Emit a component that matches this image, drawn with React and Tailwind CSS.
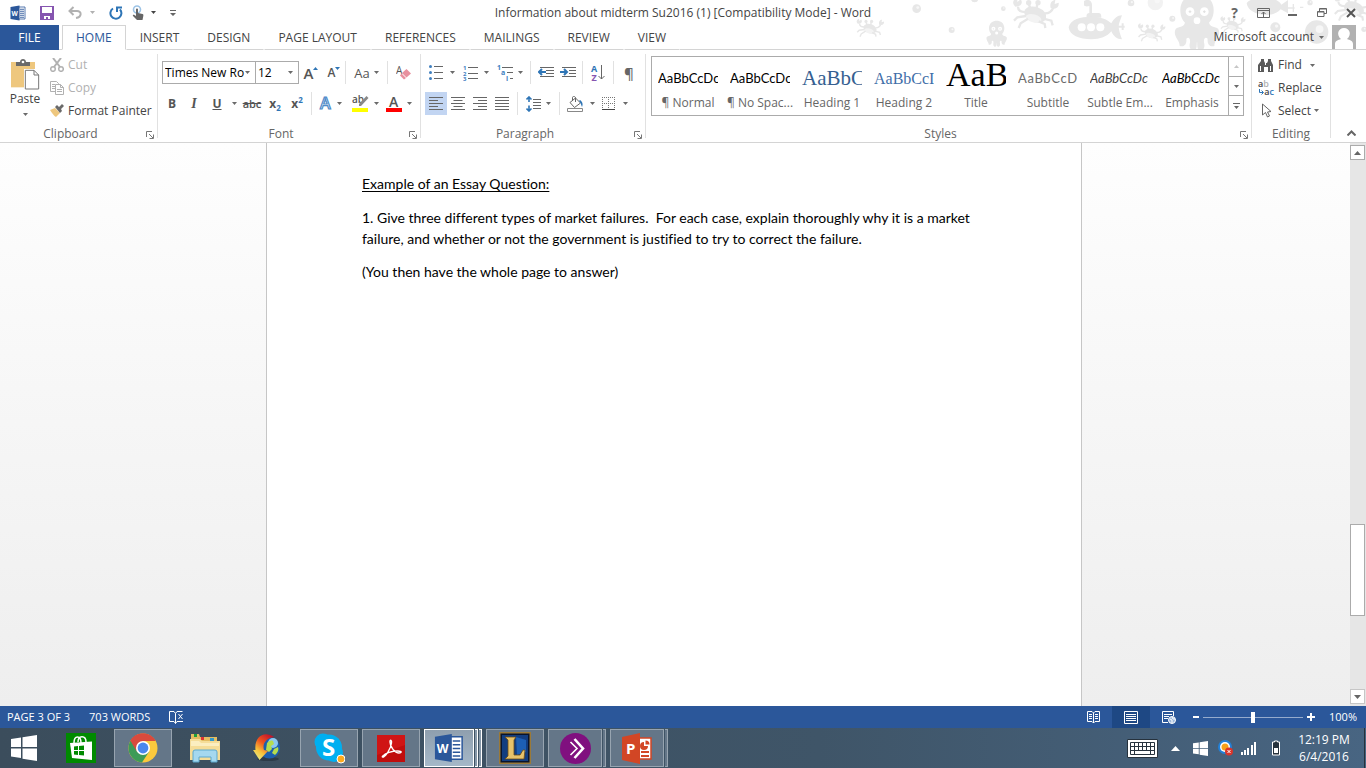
import React, { useState } from 'react';
import clsx from 'clsx';

const tabs = ['HOME', 'INSERT', 'DESIGN', 'PAGE LAYOUT', 'REFERENCES', 'MAILINGS', 'REVIEW', 'VIEW'];

const styleItems = [
  { name: '¶ Normal', sample: 'AaBbCcDc', look: "font-['Lato'] text-[13px] text-black" },
  { name: '¶ No Spac...', sample: 'AaBbCcDc', look: "font-['Lato'] text-[13px] text-black" },
  { name: 'Heading 1', sample: 'AaBbC', look: "font-['Liberation_Serif'] text-[21px] text-[#365f91]" },
  { name: 'Heading 2', sample: 'AaBbCcI', look: "font-['Liberation_Serif'] text-[16px] text-[#3f6ea8]" },
  { name: 'Title', sample: 'AaB', look: "pb-[8px] font-['Liberation_Serif'] text-[34px] text-black" },
  { name: 'Subtitle', sample: 'AaBbCcD', look: "font-['Lato'] text-[13px] tracking-wider text-[#6a6a6a]" },
  { name: 'Subtle Em...', sample: 'AaBbCcDc', look: "font-['Lato'] text-[13px] italic text-[#404040]" },
  { name: 'Emphasis', sample: 'AaBbCcDc', look: "font-['Lato'] text-[13px] italic text-black" },
];

const Caret = ({ className = 'text-[#6a6a6a]' }) => (
  <svg width="5" height="3" viewBox="0 0 5 3" className={clsx('shrink-0', className)}>
    <path d="M0 0h5L2.5 3z" fill="currentColor" />
  </svg>
);

const Separator = () => <div className="h-full w-px shrink-0 bg-[#e1e1e1]" />;

const Tool = ({ label, className = 'w-[22px]', children }) => (
  <button type="button" aria-label={label} className={clsx('flex h-full shrink-0 items-center justify-center', className)}>
    {children}
  </button>
);

const Launcher = () => (
  <svg width="8" height="8" viewBox="0 0 8 8" fill="none" stroke="#777">
    <path d="M.5 6V.5H6M3 3l4 4M7.5 3.5v4h-4" />
  </svg>
);

const Group = ({ title, launcher, className, children }) => (
  <section className={clsx('flex h-[84px] flex-col border-r border-[#e1e1e1]', className)}>
    <div className="h-[72px] shrink-0">{children}</div>
    <div className={clsx('relative flex h-[16px] shrink-0 items-center justify-center text-[#666]', launcher && 'pr-[16px]')}>
      {title}
      {launcher && (
        <button type="button" aria-label={title + ' settings'} className="absolute right-[3px] top-[5px]">
          <Launcher />
        </button>
      )}
    </div>
  </section>
);

/* ---------- Title bar ---------- */

const WordIcon = ({ size }) => (
  <svg width={size} height={size} viewBox="0 0 32 32">
    <path d="M17 4h13v24H17z" fill="#fff" stroke="#2b579a" strokeWidth="1.6" />
    <path d="M20 8.500h8M20 12.500h8M20 16.500h8M20 20.500h8M20 24.500h8" stroke="#2b579a" strokeWidth="1.8" />
    <path d="M1 4l18-3v30L1 28z" fill="#2b579a" />
    <text x="3" y="21" fontFamily="Open Sans" fontWeight="700" fontSize="13" fill="#fff">W</text>
  </svg>
);

const Crab = ({ x, y, s = 1 }) => (
  <g transform={`translate(${x} ${y}) scale(${s})`} fill="none" stroke="#e7e7e7" strokeWidth="7">
    <ellipse cx="0" cy="0" rx="34" ry="23" fill="#e7e7e7" stroke="none" transform="rotate(20)" />
    <ellipse cx="-2" cy="12" rx="24" ry="12" fill="#f3f3f3" stroke="none" transform="rotate(15)" />
    <path d="M-28-8c-16 0-24-6-24-16M28-4c14 0 22-6 26-18M-28 4l-26 4-10 10M-22 12l-22 14-6 14M24 12l24 6 4 14M10 20l18 8 2 12M-14-18l-6-14M4-20l2-14" />
    <path d="M-60-24c-12-10-6-24 6-26l0 12 10-8c8 10 2 22-16 22zM46-20c-4-14 4-24 14-24l-2 12 12-4c2 14-8 22-24 16z" fill="#e7e7e7" stroke="none" />
    <circle cx="-20" cy="-36" r="8" fill="#e7e7e7" stroke="none" />
    <circle cx="8" cy="-36" r="8" fill="#e7e7e7" stroke="none" />
  </g>
);

const Octopus = ({ x, y, s = 1 }) => (
  <g transform={`translate(${x} ${y}) scale(${s})`}>
    <path d="M-50-32c0-64 100-64 100 0 0 18-6 30-14 38 4 18 26 8 30 24 4 20-14 28-14 46-14 4-22-6-20-22-8-8-14 2-10 16 2 14-6 20-14 20-10-4-6-20-8-28-2 8 2 24-8 28-8 0-16-6-14-20 4-14-2-24-10-16 2 16-6 26-20 22 0-18-18-26-14-46 4-16 26-6 30-24-8-8-14-20-14-38z" fill="#e7e7e7" />
    <circle cx="-21" cy="-27" r="13" fill="#fff" />
    <circle cx="22" cy="-27" r="13" fill="#fff" />
    <circle cx="0" cy="0" r="10" fill="#fff" />
    <path d="M-25-27h8M-21-31v8M18-27h8M22-31v8" stroke="#e0e0e0" strokeWidth="3" />
  </g>
);

const Bubble = ({ x, y, r, light }) => (
  <g>
    <circle cx={x} cy={y} r={r} fill={light ? '#f2f2f2' : '#e7e7e7'} />
    <circle cx={x + r / 4} cy={y - r / 4} r={r / 3} fill="#f7f7f7" />
  </g>
);

const Seascape = () => (
  <svg className="pointer-events-none absolute right-0 top-0" width="516" height="49" viewBox="0 0 1548 147" aria-hidden="true">
    <Bubble x={200} y={26} r={13} />
    <Bubble x={305} y={90} r={9} />
    <Bubble x={374} y={-4} r={11} />
    <Bubble x={460} y={26} r={7} />
    <Bubble x={843} y={9} r={10} />
    <Bubble x={916} y={8} r={23} light />
    <Bubble x={967} y={56} r={9} />
    <Bubble x={1276} y={82} r={15} />
    <Bubble x={1400} y={96} r={35} />
    <Bubble x={1380} y={8} r={8} />
    <Bubble x={1542} y={88} r={8} />
    <Crab x={60} y={86} s={0.6} />
    <Crab x={556} y={44} />
    <Crab x={904} y={100} s={0.6} />
    <Crab x={1148} y={76} s={0.55} />
    <Crab x={1512} y={26} s={0.9} />
    <Octopus x={440} y={99} s={0.46} />
    <Octopus x={1041} y={62} />
    <g fill="#e7e7e7">
      <path d="M702 3c14-8 24 0 24 12v24h18c8 0 10 4 10 14h-44c-2-10 2-14 8-14V18c-6 2-14 2-16-2z" />
      <path d="M656 82c4-24 36-32 68-32 30 0 50 10 60 20 8-14 18-24 32-24-6 16-10 26-10 34s4 22 10 38c-16 0-26-10-32-24-12 16-34 24-60 24-36 0-66-12-68-36z" />
      <path d="M800 80h24M818 70v20" stroke="#e7e7e7" strokeWidth="6" />
      <path d="M1190 10c8-20 90-26 104 4l20-14v40l-22-12c-24 30-98 18-102-18z" />
      <path d="M1300 24h34M1330 12v24M1350 22h10" stroke="#e7e7e7" strokeWidth="4" />
    </g>
    <g fill="#fff">
      <circle cx="695" cy="82" r="12" />
      <circle cx="723" cy="82" r="12" />
      <circle cx="751" cy="82" r="12" />
    </g>
  </svg>
);

const TitleBar = () => (
  <div className="relative grid h-[25px] grid-cols-[1fr_auto_1fr] items-center">
    <div className="flex items-center pl-[10px]">
      <WordIcon size={16} />
      <Tool label="Save" className="ml-[11px] w-[20px]">
        <svg width="14" height="14" viewBox="0 0 14 14">
          <path d="M0 0h14v14H0z" fill="#8655b0" />
          <path d="M2 1h10v6H2zM4 10h6v3H8v-2H6v2H4z" fill="#fff" />
        </svg>
      </Tool>
      <Tool label="Undo" className="ml-[9px] w-[18px]">
        <svg width="14" height="13" viewBox="0 0 14 13" fill="none" stroke="#b1b1b1" strokeWidth="2">
          <path d="M5.500 1L1.500 5l4 4M2 5h7c5 0 5 6-1 7" />
        </svg>
      </Tool>
      <Tool label="Undo history" className="w-[16px]"><Caret className="text-[#b1b1b1]" /></Tool>
      <Tool label="Redo" className="ml-[6px] w-[20px]">
        <svg width="14" height="14" viewBox="0 0 14 14" fill="none" stroke="#2e75b6" strokeWidth="2">
          <path d="M4 2.500A5.500 5.500 0 1 0 11 3.500M8 6V1.500h5" />
        </svg>
      </Tool>
      <Tool label="Touch mode" className="ml-[3px] w-[18px]">
        <svg width="13" height="16" viewBox="0 0 13 16">
          <circle cx="5" cy="4.500" r="3.500" fill="none" stroke="#9cc3e6" strokeWidth="1.600" />
          <path d="M4 4.500c0-1.500 2-1.500 2 0V8l4.500 1c1 .3 1 1 .8 2L10.500 15H5L1 11c-.6-1 .6-1.600 1.400-1L4 11z" fill="#666" />
        </svg>
      </Tool>
      <Tool label="Touch options" className="w-[12px]"><Caret className="text-[#444]" /></Tool>
      <Tool label="Customize toolbar" className="ml-[7px] w-[14px]">
        <svg width="6" height="6" viewBox="0 0 6 6" fill="#666"><path d="M0 0h6v1H0zM0 3h6L3 6z" /></svg>
      </Tool>
    </div>
    <h1 className="text-[#444]">Information about midterm Su2016 (1) [Compatibility Mode] - Word</h1>
    <div className="flex items-center justify-end pr-px text-[#666]">
      <Tool label="Help" className="w-[29px]"><span className="text-[14px] font-bold">?</span></Tool>
      <Tool label="Ribbon display options" className="w-[29px]">
        <svg width="13" height="10" viewBox="0 0 13 10" fill="none" stroke="#666"><path d="M.5.500h12v9H.500zM.500 2.500h12M6.500 9V4M4.500 6l2-2 2 2" /></svg>
      </Tool>
      <Tool label="Minimize" className="w-[29px]">
        <svg width="9" height="10" viewBox="0 0 9 10"><path d="M0 6h9v2H0z" fill="#666" /></svg>
      </Tool>
      <Tool label="Restore" className="w-[30px]">
        <svg width="10" height="10" viewBox="0 0 10 10" fill="none" stroke="#666"><path d="M2.500 3V.500h7v5H7M.500 3.500H7v5H.500zM.500 4H7M2.500 1h7" /></svg>
      </Tool>
      <Tool label="Close" className="w-[28px]">
        <svg width="10" height="10" viewBox="0 0 10 10" stroke="#555" strokeWidth="2"><path d="M1 1l8 8M9 1L1 9" /></svg>
      </Tool>
    </div>
  </div>
);

const TabStrip = ({ active, onSelect }) => (
  <nav className="relative flex h-[25px] text-[#444]">
    <button type="button" className="w-[59px] bg-[#2b579a] text-white">FILE</button>
    <div className="w-[3px] border-b border-[#d4d4d4]" />
    {tabs.map((tab) => (
      <button
        key={tab}
        type="button"
        onClick={() => onSelect(tab)}
        className={clsx(
          'border px-[13px]',
          tab === active
            ? 'border-[#d4d4d4] border-b-white bg-white text-[#2b579a]'
            : 'border-transparent border-b-[#d4d4d4]'
        )}
      >
        {tab}
      </button>
    ))}
    <div className="flex flex-1 items-center justify-end gap-[8px] border-b border-[#d4d4d4] pr-[10px]">
      <button type="button" className="flex items-center gap-[5px]">
        Microsoft account <Caret />
      </button>
      <svg width="24" height="24" viewBox="0 0 24 24">
        <path d="M0 0h24v24H0z" fill="#b1b1b1" />
        <path d="M3 24v-5c0-3 3-4 6-5-5-4-3-11 3-11s8 7 3 11c3 1 6 2 6 5v5z" fill="#fff" />
      </svg>
    </div>
  </nav>
);

/* ---------- Ribbon groups ---------- */

const ClipboardGroup = () => (
  <Group title="Clipboard" launcher className="w-[158px]">
    <div className="flex">
      <button type="button" className="flex w-[50px] flex-col items-center pt-[4px] text-[#444]">
        <svg width="30" height="32" viewBox="36 171 90 96">
          <path d="M39 183h72v76H39z" fill="#eec77e" />
          <path d="M54 183h12c0-12 18-12 18 0h12v12H54z" fill="#6a6a6a" />
          <circle cx="75" cy="183" r="4" fill="#fff" />
          <path d="M78 204h45v63H78z" fill="#fff" />
          <path d="M82 208h26l14 14v42H82zM108 208v14h14" fill="#fff" stroke="#777" strokeWidth="3" />
        </svg>
        <span className="h-[18px] leading-[18px]">Paste</span>
        <span className="flex h-[12px] items-center"><Caret /></span>
      </button>
      <div className="flex flex-col text-[#b1b1b1]">
        <button type="button" className="flex h-[22px] items-center gap-[4px]">
          <svg width="14" height="14" viewBox="0 0 14 14" fill="none" stroke="currentColor" strokeWidth="1.500">
            <circle cx="3" cy="11" r="2.300" /><circle cx="11" cy="11" r="2.300" />
            <path d="M4 9l7-9M10 9L3 0" strokeWidth="2" />
          </svg>
          Cut
        </button>
        <button type="button" className="flex h-[23px] items-center gap-[4px]">
          <svg width="14" height="14" viewBox="0 0 14 14" fill="#fff" stroke="currentColor">
            <path d="M.500.500h6l2 2v8h-8zM2 3.500h3M2 5.500h3M2 7.500h3" />
            <path d="M5.500 3.500h5l3 3v7h-8zM10.500 3.500v3h3M7 8.500h5M7 10.500h5" />
          </svg>
          Copy
        </button>
        <button type="button" className="flex h-[23px] items-center gap-[4px] text-[#444]">
          <svg width="14" height="13" viewBox="0 0 14 13">
            <path d="M0 6l5-2 5 5-4 4c-2-1-4-4-6-7z" fill="#eec77e" />
            <path d="M5 3l2-2 2 2 3-3 2 2-3 3 1 2-2 2z" fill="#6a6a6a" />
          </svg>
          Format Painter
        </button>
      </div>
    </div>
  </Group>
);

const FontGroup = () => (
  <Group title="Font" launcher className="w-[263px]">
    <div className="flex flex-col gap-[8px] pl-[4px] pt-[7px]">
      <div className="flex h-[23px]">
        <div className="flex w-[94px] items-center border border-[#ababab]">
          <input aria-label="Font" defaultValue="Times New Ro" className="w-[82px] pl-[2px] text-black outline-none" />
          <Caret />
        </div>
        <div className="-ml-px flex w-[44px] items-center border border-[#ababab]">
          <input aria-label="Font size" defaultValue="12" className="w-[32px] pl-[2px] text-black outline-none" />
          <Caret />
        </div>
        <Tool label="Grow font" className="w-[24px] text-[#555]">
          <span className="text-[15px] font-semibold">A</span>
          <svg width="5" height="12" viewBox="0 0 5 12"><path d="M0 3h5L2.500 0z" fill="#2e75b6" /></svg>
        </Tool>
        <Tool label="Shrink font" className="w-[22px] text-[#555]">
          <span className="text-[12px] font-semibold">A</span>
          <svg width="5" height="12" viewBox="0 0 5 12"><path d="M0 0h5L2.500 3z" fill="#2e75b6" /></svg>
        </Tool>
        <Separator />
        <Tool label="Change case" className="w-[41px] gap-[4px] text-[#555]">
          <span className="text-[13px]">Aa</span><Caret />
        </Tool>
        <Separator />
        <Tool label="Clear formatting" className="w-[30px]">
          <svg width="15" height="15" viewBox="0 0 15 15">
            <text x="0" y="9" fontFamily="Open Sans" fontSize="10" fill="#555">A</text>
            <path d="M10.500 4L15 8.500l-4.500 4L6 8z" fill="#e8919f" />
            <path d="M5.500 8.500l4.500 4.500-2 1.500-4-4z" fill="#e8919f" />
          </svg>
        </Tool>
      </div>
      <div className="flex h-[23px] text-[#555]">
        <Tool label="Bold" className="w-[20px]"><b>B</b></Tool>
        <Tool label="Italic" className="w-[24px]"><i className="font-['Liberation_Serif'] text-[14px] font-bold">I</i></Tool>
        <Tool label="Underline"><b className="underline">U</b></Tool>
        <Tool label="Underline style" className="w-[12px]"><Caret /></Tool>
        <Tool label="Strikethrough" className="w-[24px]"><span className="text-[11px] font-semibold line-through">abc</span></Tool>
        <Tool label="Subscript"><b>x</b><b className="pt-[8px] text-[8px] text-[#2e75b6]">2</b></Tool>
        <Tool label="Superscript"><b>x</b><b className="pb-[8px] text-[8px] text-[#2e75b6]">2</b></Tool>
        <div className="w-[3px]" />
        <Separator />
        <Tool label="Text effects" className="w-[36px] gap-[4px]">
          <svg width="14" height="17" viewBox="0 0 14 17">
            <text x="1" y="14" fontFamily="Open Sans" fontSize="16" fontWeight="600" fill="#fff" stroke="#4f8bc9" strokeWidth="1.200">A</text>
          </svg>
          <Caret />
        </Tool>
        <Tool label="Highlight" className="w-[34px] gap-[5px]">
          <svg width="17" height="17" viewBox="0 0 17 17">
            <text x="0" y="8" fontFamily="Open Sans" fontSize="10" fontWeight="600" fill="#555">ab</text>
            <path d="M14.500 1l2 2L9 11H7V9z" fill="#888" />
            <path d="M0 13h16v4H0z" fill="#ff0" />
          </svg>
          <Caret />
        </Tool>
        <Tool label="Font color" className="w-[34px] gap-[5px]">
          <svg width="16" height="17" viewBox="0 0 16 17">
            <text x="3" y="12" fontFamily="Open Sans" fontSize="14" fontWeight="600" fill="#555">A</text>
            <path d="M0 13h16v4H0z" fill="#f00" />
          </svg>
          <Caret />
        </Tool>
      </div>
    </div>
  </Group>
);

const AlignIcon = ({ d }) => (
  <svg width="14" height="13" viewBox="0 0 14 13" stroke="#666"><path d={d} /></svg>
);

const ParagraphGroup = () => (
  <Group title="Paragraph" launcher className="w-[225px]">
    <div className="flex flex-col gap-[8px] pl-[4px] pt-[7px]">
      <div className="flex h-[23px]">
        <Tool label="Bullets" className="w-[34px] gap-[7px]">
          <svg width="14" height="15" viewBox="0 0 14 15" fill="#3f7fbf">
            <circle cx="1.500" cy="1.500" r="1.500" /><circle cx="1.500" cy="7.500" r="1.500" /><circle cx="1.500" cy="13.500" r="1.500" />
            <path d="M5 1.500h9M5 7.500h9M5 13.500h9" stroke="#666" />
          </svg>
          <Caret />
        </Tool>
        <Tool label="Numbering" className="w-[34px] gap-[6px]">
          <svg width="15" height="16" viewBox="0 0 15 16" fill="#3f7fbf" fontFamily="Open Sans" fontSize="6" fontWeight="700">
            <text x="0" y="5">1</text><text x="0" y="10.500">2</text><text x="0" y="16">3</text>
            <path d="M5 2.500h10M5 8.500h10M5 13.500h10" stroke="#666" />
          </svg>
          <Caret />
        </Tool>
        <Tool label="Multilevel list" className="w-[34px] gap-[4px]">
          <svg width="17" height="16" viewBox="0 0 17 16" fill="#3f7fbf" fontFamily="Open Sans" fontSize="7" fontWeight="700">
            <text x="0" y="5">1</text><text x="4" y="10">a</text><text x="9" y="16">i</text>
            <path d="M5 2.500h11M10 7.500h6M13 13.500h3" stroke="#666" />
          </svg>
          <Caret />
        </Tool>
        <div className="w-[3px]" />
        <Separator />
        <div className="w-[4px]" />
        <Tool label="Decrease indent">
          <svg width="16" height="11" viewBox="0 0 16 11" fill="none" stroke="#666">
            <path d="M2 .5h14M8 3.500h8M8 6.500h8M2 9.500h14" /><path d="M8 5H2M4 2L1 5l3 3" stroke="#2e75b6" strokeWidth="2" />
          </svg>
        </Tool>
        <Tool label="Increase indent">
          <svg width="16" height="11" viewBox="0 0 16 11" fill="none" stroke="#666">
            <path d="M2 .5h14M9 3.500h7M9 6.500h7M2 9.500h14" /><path d="M0 5h6M4 2l3 3-3 3" stroke="#2e75b6" strokeWidth="2" />
          </svg>
        </Tool>
        <div className="w-[3px]" />
        <Separator />
        <Tool label="Sort" className="w-[30px]">
          <span className="flex flex-col text-[9px] font-bold leading-[9px]">
            <span className="text-[#2e75b6]">A</span>
            <span className="text-[#8655b0]">Z</span>
          </span>
          <svg width="8" height="15" viewBox="0 0 8 15" fill="none" stroke="#666">
            <path d="M4.500 0v14M1.500 11l3 3 3-3" />
          </svg>
        </Tool>
        <Separator />
        <Tool label="Show marks" className="w-[30px]"><span className="text-[15px] font-semibold text-[#666]">¶</span></Tool>
      </div>
      <div className="flex h-[23px]">
        <Tool label="Align left" className="w-[22px] bg-[#c2d5f2]"><AlignIcon d="M0 .5h14M0 3.500h9M0 6.500h14M0 9.500h9M0 12.500h14" /></Tool>
        <Tool label="Center"><AlignIcon d="M0 .5h14M2.500 3.500h9M0 6.500h14M2.500 9.500h9M0 12.500h14" /></Tool>
        <Tool label="Align right"><AlignIcon d="M0 .5h14M5 3.500h9M0 6.500h14M5 9.500h9M0 12.500h14" /></Tool>
        <Tool label="Justify"><AlignIcon d="M0 .5h14M0 3.500h14M0 6.500h14M0 9.500h14M0 12.500h14" /></Tool>
        <div className="w-[4px]" />
        <Separator />
        <Tool label="Line spacing" className="w-[41px] gap-[5px]">
          <svg width="15" height="16" viewBox="0 0 15 16" fill="none" stroke="#666">
            <path d="M7 3.500h8M7 6.500h8M7 9.500h8M7 12.500h8" />
            <path d="M3 1v5M.500 3.500L3 1l2.500 2.500M3 9.500V15M.500 12.500L3 15l2.500-2.500" stroke="#2e75b6" strokeWidth="1.600" />
          </svg>
          <Caret />
        </Tool>
        <Separator />
        <div className="w-[4px]" />
        <Tool label="Shading" className="w-[34px] gap-[6px]">
          <svg width="17" height="16" viewBox="0 0 17 16" fill="none" stroke="#666">
            <path d="M3 6.500L8.500 2l5 5-6 4.500zM5.500 5V1.500C5.500 0 8.500 0 8.500 2v4" />
            <path d="M13 4c3 2 3 5 2 7-1-2-1-4-3-6z" fill="#2e75b6" stroke="none" />
            <path d="M.500 12.500h15v3H.500z" stroke="#888" />
          </svg>
          <Caret />
        </Tool>
        <Tool label="Borders" className="w-[34px] gap-[7px]">
          <svg width="14" height="14" viewBox="0 0 14 14" stroke="#777">
            <path d="M0 .5h13M0 6.500h13M.500 0v13M6.500 0v13M12.500 0v13" strokeDasharray="1 1" fill="none" />
            <path d="M0 12.500h13" stroke="#444" />
          </svg>
          <Caret />
        </Tool>
      </div>
    </div>
  </Group>
);

const StylesGroup = () => (
  <Group title="Styles" launcher className="min-w-0 flex-1">
    <div className="flex pl-[5px] pr-[7px] pt-[2px]">
      <div className="flex h-[60px] min-w-0 flex-1 border border-[#ababab]">
        <div className="flex flex-1 overflow-hidden">
          {styleItems.map((item) => (
            <button key={item.name} type="button" className="flex w-[72px] shrink-0 flex-col items-center pt-[7px] text-[#666]">
              <span className={clsx('flex h-[29px] w-[60px] items-center overflow-hidden whitespace-nowrap leading-none', item.look)}>
                {item.sample}
              </span>
              <span className="leading-[20px]">{item.name}</span>
            </button>
          ))}
        </div>
        <div className="flex w-[15px] flex-col divide-y divide-[#ababab] border-l border-[#ababab]">
          <button type="button" aria-label="Previous styles" className="flex flex-1 items-center justify-center">
            <Caret className="rotate-180 text-[#c6c6c6]" />
          </button>
          <button type="button" aria-label="Next styles" className="flex flex-1 items-center justify-center"><Caret /></button>
          <button type="button" aria-label="More styles" className="flex flex-1 items-center justify-center">
            <svg width="7" height="6" viewBox="0 0 7 6" fill="#666"><path d="M0 0h7v1H0zM1 3h5L3.500 6z" /></svg>
          </button>
        </div>
      </div>
    </div>
  </Group>
);

const EditingGroup = () => (
  <Group title="Editing" className="w-[79px]">
    <div className="flex flex-col pl-[6px] text-[#444]">
      <button type="button" className="flex h-[22px] items-center gap-[4px]">
        <svg width="16" height="13" viewBox="0 0 16 13" fill="#5a5a5a">
          <path d="M3 0h3v2l1 2h2l1-2V0h3v2l2 4v7h-5V8H6v5H0V6l3-4z" />
          <path d="M2.500 7v5M12.500 7v5M7.500 4v2" stroke="#fff" />
        </svg>
        Find
        <span className="pl-[4px]"><Caret /></span>
      </button>
      <button type="button" className="flex h-[23px] items-center gap-[4px]">
        <span className="flex h-[16px] w-[16px] flex-col text-[9px] font-semibold leading-[8px]">
          <span className="text-left">a<span className="text-[#b1b1b1]">b</span></span>
          <span className="flex items-center justify-end">
            <svg width="5" height="6" viewBox="0 0 5 6" fill="none" stroke="#2e75b6"><path d="M.500 0v3.500H4M2.500 1.500l2 2-2 2" /></svg>
            <span>a<span className="text-[#2e75b6]">c</span></span>
          </span>
        </span>
        Replace
      </button>
      <button type="button" className="flex h-[23px] items-center gap-[4px]">
        <svg width="16" height="15" viewBox="0 0 16 15" fill="#fff" stroke="#666">
          <path d="M4.500 1v11l3-2.500 2 4.500 2-1-2-4 3.500-.5z" />
        </svg>
        <span className="flex items-center gap-[3px]">Select <Caret /></span>
      </button>
    </div>
  </Group>
);

/* ---------- Document ---------- */

const ScrollBar = () => (
  <div className="flex w-[16px] flex-col bg-[#e6e6e6] pb-[2px] pr-px pt-[2px]">
    <button type="button" aria-label="Scroll up" className="flex h-[15px] items-center justify-center border border-[#ababab] bg-white">
      <svg width="7" height="4" viewBox="0 0 7 4"><path d="M0 4h7L3.500 0z" fill="#666" /></svg>
    </button>
    <div className="flex-[365]" />
    <div className="h-[92px] border border-[#ababab] bg-white" />
    <div className="flex-[73]" />
    <button type="button" aria-label="Scroll down" className="flex h-[15px] items-center justify-center border border-[#c6c6c6] bg-white">
      <svg width="7" height="4" viewBox="0 0 7 4"><path d="M0 0h7L3.500 4z" fill="#666" /></svg>
    </button>
  </div>
);

const Document = () => (
  <main className="flex flex-1 bg-linear-to-b from-[#fefefe] to-[#eeeeee]">
    <div className="flex flex-1 justify-center pr-[2px]">
      <article className="w-[816px] border-x border-[#c6c6c6] bg-white px-[95px] pt-[30px] font-['Lato',sans-serif] text-[14px] leading-[21px] text-black [font-variant-ligatures:none]">
        <p className="mb-[13px] underline underline-offset-2">Example of an Essay Question:</p>
        <p className="mb-[12px]">
          1. Give three different types of market failures.&nbsp; For each case, explain thoroughly why it is a market
          failure, and whether or not the government is justified to try to correct the failure.
        </p>
        <p>(You then have the whole page to answer)</p>
      </article>
    </div>
    <ScrollBar />
  </main>
);

/* ---------- Status bar ---------- */

const StatusBar = () => {
  const [zoom, setZoom] = useState(50);
  return (
    <footer className="flex h-[22px] items-center justify-between bg-[#2b579a] text-[11px] text-white">
      <div className="flex items-center gap-[19px] pl-[7px]">
        <span>PAGE 3 OF 3</span>
        <span>703 WORDS</span>
        <svg width="15" height="13" viewBox="0 0 15 13" fill="none" stroke="#fff">
          <path d="M6.500 2.500L5 .5H.500v10H5l1.500 2 1.500-2h6M6.500 2.500v10M6.500 2.500L8 .5h5.500M9.500 3l4 5M13.500 3l-4 5" />
        </svg>
      </div>
      <div className="flex h-full items-center">
        <Tool label="Read mode" className="w-[38px]">
          <svg width="13" height="13" viewBox="0 0 13 13" fill="none" stroke="#fff">
            <path d="M6.500 2v10L5 10.500H.500V.500H5L6.500 2 8 .5h4.500v10H8L6.500 12M2 3.500h3M2 5.500h3M2 7.500h3M8 3.500h3M8 5.500h3M8 7.500h3" />
          </svg>
        </Tool>
        <Tool label="Print layout" className="w-[38px] bg-[#1e4884]">
          <svg width="14" height="13" viewBox="0 0 14 13" fill="none" stroke="#fff"><path d="M.500.500h13v12H.500zM2 3.500h10M2 5.500h10M2 7.500h10M2 9.500h10" /></svg>
        </Tool>
        <Tool label="Web layout" className="w-[38px]">
          <svg width="14" height="13" viewBox="0 0 14 13" fill="none" stroke="#fff">
            <path d="M6 11.500H.500V.500h11V5M2 3.500h8M2 5.500h5M2 7.500h4" /><circle cx="10" cy="9" r="3.500" fill="#9db8dc" /><path d="M8 8l2 1v3M10 6l1 2 2 0" />
          </svg>
        </Tool>
        <button type="button" aria-label="Zoom out" className="ml-[5px] h-[2px] w-[6px] bg-white" />
        <input
          type="range"
          aria-label="Zoom"
          value={zoom}
          onChange={(e) => setZoom(e.target.value)}
          className="mx-[4px] h-[11px] w-[100px] appearance-none bg-linear-to-b from-transparent from-45% via-white via-45% to-transparent to-55% [&::-webkit-slider-thumb]:h-[11px] [&::-webkit-slider-thumb]:w-[4px] [&::-webkit-slider-thumb]:appearance-none [&::-webkit-slider-thumb]:bg-white"
        />
        <button type="button" aria-label="Zoom in">
          <svg width="8" height="8" viewBox="0 0 8 8" fill="#fff"><path d="M3 0h2v3h3v2H5v3H3V5H0V3h3z" /></svg>
        </button>
        <span className="w-[51px] pr-[9px] text-right">100%</span>
      </div>
    </footer>
  );
};

/* ---------- Taskbar ---------- */

const TaskItem = ({ label, open, active, stack = 0, children }) => (
  <button type="button" aria-label={label} className="flex h-[38px] w-[58px] gap-px">
    <span
      className={clsx(
        'flex h-full flex-1 items-center justify-center border',
        active ? 'border-white bg-linear-to-b from-[#8f9fae] to-[#a5b8c8]' : open ? 'border-[#97a4b0] bg-[#647688]' : 'border-transparent'
      )}
    >
      {children}
    </span>
    {Array.from({ length: stack }, (_, i) => (
      <span key={i} className={clsx('h-full w-[3px] border-y border-r', active ? 'border-white bg-[#8597a8]' : 'border-[#97a4b0] bg-[#647688]')} />
    ))}
  </button>
);

const WindowsLogo = ({ size }) => (
  <svg width={size} height={size} viewBox="0 0 26 26" fill="#fff">
    <path d="M0 4l10-1.500V12H0zM11.500 2.200L26 0v12H11.500zM0 13.500h10V23L0 21.500zM11.500 13.500H26V26l-14.500-2.200z" />
  </svg>
);

const Taskbar = () => (
  <div className="flex h-[40px] items-center justify-between bg-linear-to-r from-[#3b4d5c] via-[#3f5568] via-60% to-[#486582]">
    <div className="flex items-center gap-[4px]">
      <button type="button" aria-label="Start" className="flex w-[48px] justify-center"><WindowsLogo size={26} /></button>
      <TaskItem label="Store">
        <svg width="30" height="30" viewBox="0 0 30 30">
          <path d="M0 0h30v30H0z" fill="#008a00" />
          <path d="M4 10l22-1.500V27L6 25z" fill="#fff" />
          <path d="M8 10c0-8 7-8 7 0M12 9c0-7 8-7 8 0" fill="none" stroke="#fff" strokeWidth="1.500" />
          <path d="M8 13.500l4-.4V17H8zM13 13l5-.5V17h-5zM8 18h4v4l-4-.4zM13 18h5v4.600l-5-.5z" fill="#008a00" />
        </svg>
      </TaskItem>
      <TaskItem label="Chrome" open>
        <svg width="30" height="30" viewBox="0 0 30 30">
          <circle cx="15" cy="15" r="14.500" fill="#fbc93d" />
          <path d="M15 15L2.400 7.800A14.500 14.500 0 0 1 27.600 7.800H15z" fill="#d94a3d" />
          <path d="M15 15L2.400 7.800A14.500 14.500 0 0 0 14 29.500l7.200-11z" fill="#3d9b58" />
          <path d="M2.400 7.800L8.800 18.600 15 8h12.600C22-2 8-2 2.400 7.800z" fill="#d94a3d" />
          <circle cx="15" cy="15" r="7" fill="#fff" /><circle cx="15" cy="15" r="5.400" fill="#4a87ee" />
        </svg>
      </TaskItem>
      <TaskItem label="File Explorer">
        <svg width="32" height="30" viewBox="0 0 32 30">
          <path d="M2 1h8l1 3h17v5H2z" fill="#e3bd62" />
          <path d="M5 1h3v3H5z" fill="#1fa03a" /><path d="M12 4h3v3h-3z" fill="#d33" /><path d="M21 5h4v3h-4z" fill="#39c" />
          <path d="M1 6h10l2 2h18v19H1z" fill="#f5dd98" />
          <path d="M2 8h8l2 2h18v3H2z" fill="#fbeec0" />
          <path d="M4 29V19q0-2 2-2h20q2 0 2 2v10h-6v-5H10v5z" fill="#a5d8ef" stroke="#5da9cf" />
        </svg>
      </TaskItem>
      <TaskItem label="Download Manager">
        <svg width="28" height="28" viewBox="0 0 28 28">
          <defs>
            <linearGradient id="swoosh" x1="0.800" y1="0" x2="0.200" y2="1">
              <stop offset="0" stopColor="#c2102c" />
              <stop offset="0.400" stopColor="#f0571e" />
              <stop offset="0.700" stopColor="#f7c33a" />
              <stop offset="1" stopColor="#e4ee8a" />
            </linearGradient>
          </defs>
          <ellipse cx="15" cy="25" rx="11" ry="2" fill="#2c3b48" />
          <circle cx="16.500" cy="14" r="10.500" fill="#1c5fae" />
          <circle cx="20" cy="9" r="5" fill="#8cc8ef" />
          <path d="M14 9c2-2 4-3 6-2l1 3-3 2 1 3-3 3-3-2zM21 15l4-2c1 3 0 5-3 8l-3-2z" fill="#b5dc4e" />
          <path d="M21 3C11-4 1 3 2.500 16H0l6.500 10L15 17l-4-1C9 10 13 4 21 3z" fill="url(#swoosh)" />
        </svg>
      </TaskItem>
      <TaskItem label="Skype" open>
        <svg width="31" height="31" viewBox="0 0 31 31">
          <circle cx="9" cy="9" r="8.500" fill="#00aff0" /><circle cx="20" cy="20" r="9" fill="#00aff0" /><circle cx="15" cy="14.500" r="13" fill="#00aff0" />
          <text x="8" y="23" fontFamily="Open Sans" fontSize="24" fontWeight="700" fill="#fff">S</text>
          <circle cx="27" cy="26" r="4" fill="#ffaa1e" stroke="#fff" />
        </svg>
      </TaskItem>
      <TaskItem label="Adobe Reader" open>
        <svg width="28" height="27" viewBox="0 0 28 27">
          <path d="M0 0h28v27H0z" fill="#c00d0d" />
          <path d="M0 0h28v10L0 20z" fill="#d01515" />
          <path d="M6 21c2-3 9-5 15-5 4 0 4 2 1 2-4 0-9-6-9-11 0-3 2-2 1.500 1C14 13 9 21 6.500 22c-1.500.5-1.500-.5-.5-1z" fill="none" stroke="#fff" strokeWidth="1.400" />
        </svg>
      </TaskItem>
      <TaskItem label="Word" open active stack={2}><WordIcon size={30} /></TaskItem>
      <TaskItem label="League of Legends" open>
        <svg width="32" height="32" viewBox="0 0 32 32">
          <path d="M0 0h32v32H0z" fill="#9b7a38" /><path d="M1.500 1.500h29v29h-29z" fill="#09142c" />
          <path d="M3 3h26v26H3z" fill="#123d80" /><path d="M17 5l10 3v12l-9 3z" fill="#1d5fb4" />
          <path d="M6 5h11l-2 3v15h6l3-5h2l-1 9H6l3-3V8z" fill="#e6c26b" stroke="#6d4d15" strokeWidth=".8" />
        </svg>
      </TaskItem>
      <TaskItem label="Connect" open stack={1}>
        <svg width="31" height="31" viewBox="0 0 31 31" fill="none" stroke="#fff">
          <circle cx="15.500" cy="15.500" r="15.500" fill="#80107f" stroke="none" />
          <path d="M10.500 9l6.500 6.500-6.500 6.500" strokeWidth="1.600" />
          <path d="M14.500 6l8.500 9.500-8.500 9.500" strokeWidth="2.600" />
        </svg>
      </TaskItem>
      <TaskItem label="PowerPoint" open stack={1}>
        <svg width="30" height="31" viewBox="0 0 30 31">
          <path d="M17 5h12v21H17z" fill="#fff" stroke="#d24625" strokeWidth="1.500" />
          <path d="M19 18h8v2h-8zM19 22h8v2h-8zM22 9v4h4a4 4 0 1 1-4-4z" fill="#d24625" /><path d="M23.500 7.500a4 4 0 0 1 4 4h-4z" fill="#d24625" />
          <path d="M0 4l18-4v31L0 27z" fill="#d24625" />
          <text x="4" y="21" fontFamily="Open Sans" fontSize="15" fontWeight="700" fill="#fff">P</text>
        </svg>
      </TaskItem>
    </div>
    <div className="flex h-full items-center">
      <svg width="31" height="19" viewBox="0 0 31 19">
        <path d="M.500.500h30v18H.500z" fill="#fff" stroke="#26323d" />
        <path d="M3.500 3.500h24v12h-24zM3.500 7.500h24M3.500 11.500h24M7.500 3v12M11.500 3v8.500M15.500 3v8.500M19.500 3v8.500M23.500 3v12" fill="none" stroke="#26323d" />
      </svg>
      <svg width="9" height="5" viewBox="0 0 9 5" className="ml-[13px]"><path d="M0 5h9L4.500 0z" fill="#fff" /></svg>
      <span className="ml-[13px]"><WindowsLogo size={15} /></span>
      <svg width="16" height="16" viewBox="0 0 16 16" className="ml-[10px]">
        <circle cx="7" cy="7" r="7" fill="#2280d8" /><circle cx="7" cy="7" r="5" fill="#fff" /><circle cx="7" cy="7" r="3.500" fill="#f6a11a" />
        <circle cx="11" cy="11.500" r="4" fill="#d9352b" /><path d="M9.500 10l3 3M12.500 10l-3 3" stroke="#fff" />
      </svg>
      <svg width="16" height="13" viewBox="0 0 16 13" fill="#fff" className="ml-[7px]">
        <path d="M0 10h2v3H0zM3 8h2v5H3zM6 6h2v7H6zM10 3h2v10h-2zM13 0h2v13h-2z" />
      </svg>
      <svg width="10" height="16" viewBox="0 0 10 16" className="ml-[14px]">
        <path d="M3.500 2V1h3v1h2v13h-7V2z" fill="#26323d" stroke="#fff" /><path d="M3 8h4v5H3z" fill="#fff" />
      </svg>
      <div className="ml-[17px] w-[52px] text-center leading-[17px] text-white">
        <div className="whitespace-nowrap">12:19 PM</div>
        <div>6/4/2016</div>
      </div>
      <div className="ml-[14px] h-full w-[2px] border-l border-[#26323d]" />
    </div>
  </div>
);

export default function App() {
  const [activeTab, setActiveTab] = useState('HOME');

  return (
    <div className="flex min-h-screen flex-col bg-white font-['Open_Sans',sans-serif] text-[12px] leading-[16px]">
      <header className="relative">
        <Seascape />
        <TitleBar />
        <TabStrip active={activeTab} onSelect={setActiveTab} />
      </header>
      <div className="flex h-[93px] border-b border-[#d4d4d4] pt-[4px]">
        <ClipboardGroup />
        <FontGroup />
        <ParagraphGroup />
        <StylesGroup />
        <EditingGroup />
        <div className="flex w-[35px] items-end justify-center pb-[6px] pl-[6px]">
          <button type="button" aria-label="Collapse ribbon">
            <svg width="9" height="6" viewBox="0 0 9 6" fill="none" stroke="#666" strokeWidth="2"><path d="M.500 5.500l4-4 4 4" /></svg>
          </button>
        </div>
      </div>
      <Document />
      <StatusBar />
      <Taskbar />
    </div>
  );
}
